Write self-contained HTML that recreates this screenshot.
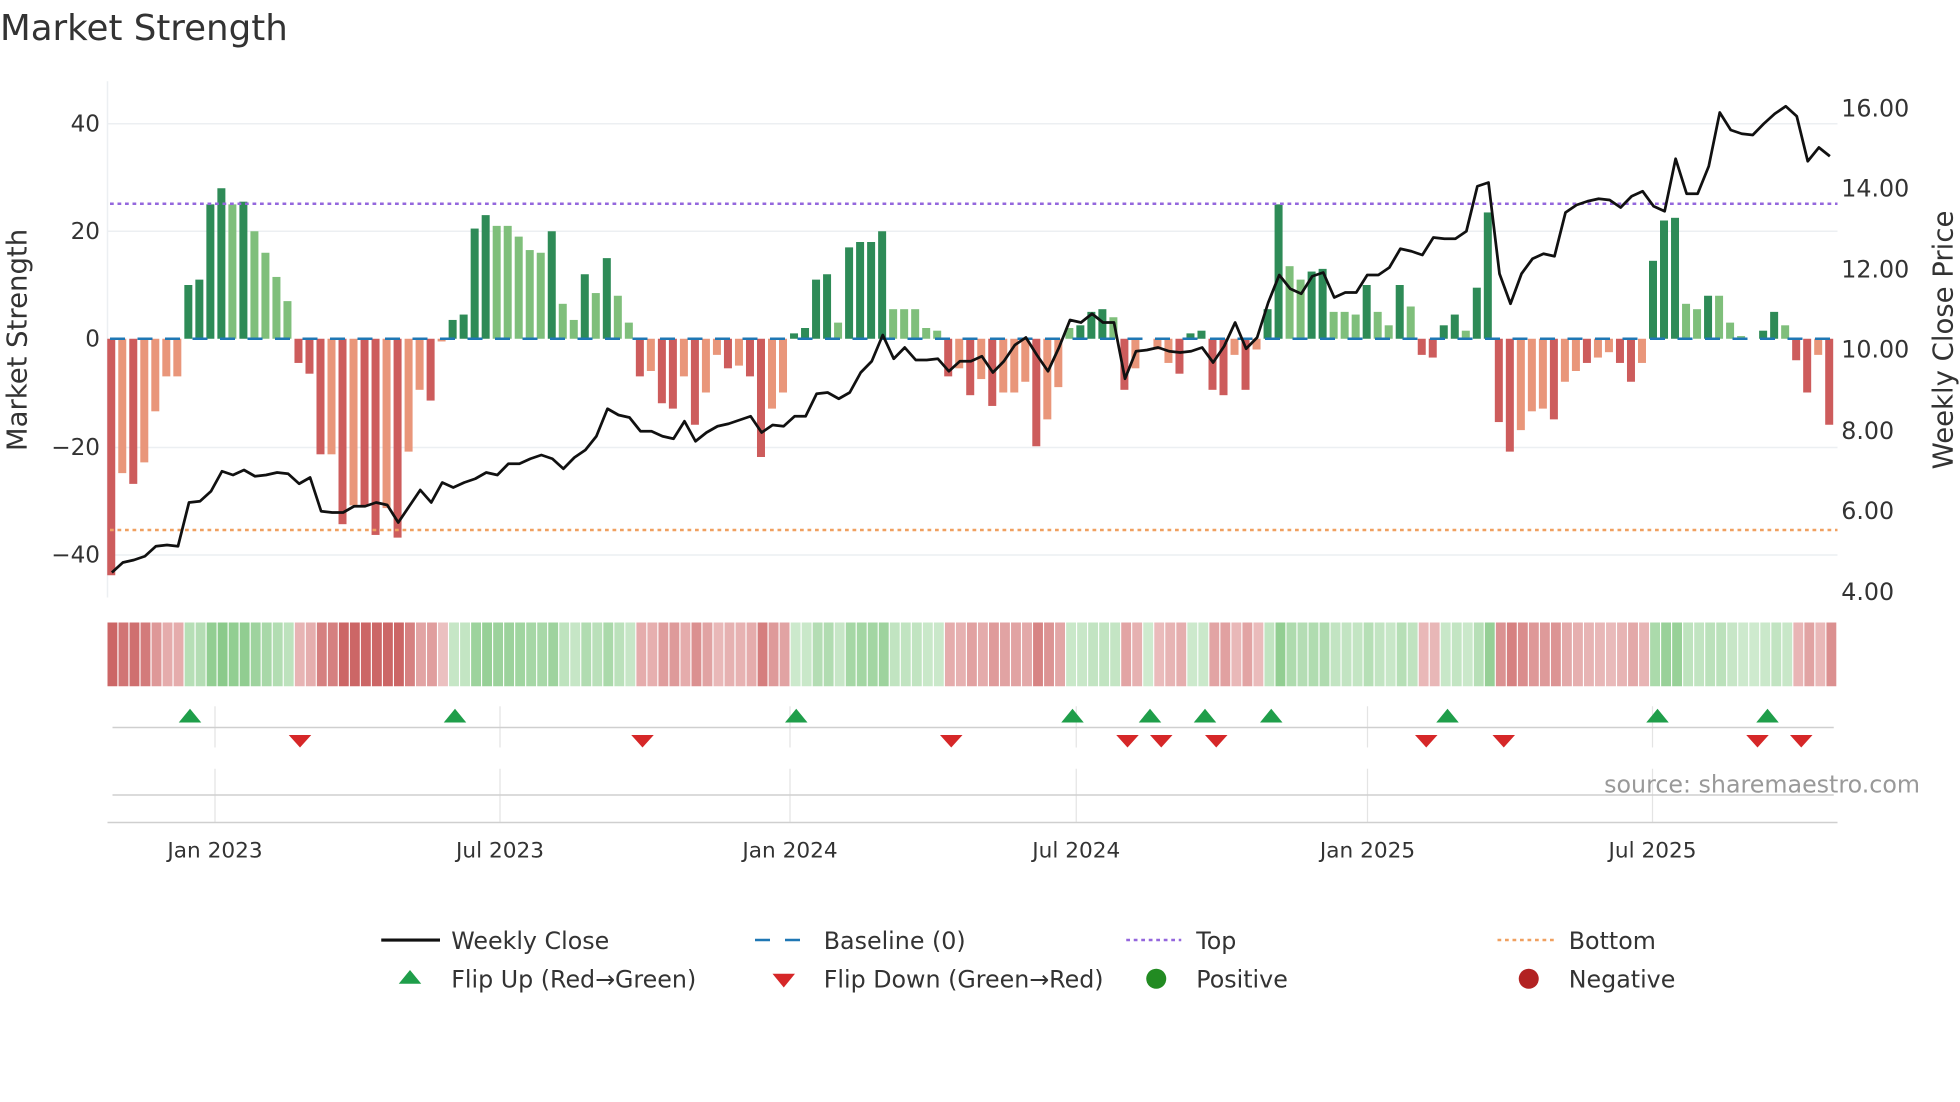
<!DOCTYPE html>
<html><head><meta charset="utf-8"><style>
html,body{margin:0;padding:0;background:#fff;}
svg{display:block;font-family:"DejaVu Sans","Liberation Sans",sans-serif;}
</style></head><body>
<svg id="s" width="1960" height="1102" viewBox="0 0 1568 881.6" xmlns="http://www.w3.org/2000/svg">
<text x="0" y="32" font-size="28.5" fill="#333">Market Strength</text>
<g stroke="#eceff2" stroke-width="1.2">
<line x1="86" y1="99" x2="1470" y2="99"/><line x1="86" y1="185" x2="1470" y2="185"/><line x1="86" y1="358" x2="1470" y2="358"/><line x1="86" y1="444" x2="1470" y2="444"/>
<line x1="86" y1="65" x2="86" y2="478"/>
</g>
<g font-size="18.5" fill="#333" text-anchor="end">
<text x="80" y="105">40</text><text x="80" y="277">0</text><text x="80" y="191">20</text><text x="80" y="364">−20</text><text x="80" y="450">−40</text>
</g>
<g font-size="19" fill="#333">
<text x="1473" y="93">16.00</text><text x="1473" y="157">14.00</text><text x="1473" y="222">12.00</text><text x="1473" y="286">10.00</text><text x="1473" y="351">8.00</text><text x="1473" y="415">6.00</text><text x="1473" y="480">4.00</text>
</g>
<text transform="translate(21,272) rotate(-90)" font-size="22" fill="#333" text-anchor="middle">Market Strength</text>
<text transform="translate(1562,272) rotate(-90)" font-size="22" fill="#333" text-anchor="middle">Weekly Close Price</text>
<g id="bars"></g>
<line x1="88" y1="271" x2="1470" y2="271" stroke="#1f77b4" stroke-width="2" stroke-dasharray="12,10"/>
<line x1="88" y1="163" x2="1470" y2="163" stroke="#9467dd" stroke-width="2" stroke-dasharray="3,3"/>
<line x1="88" y1="424" x2="1470" y2="424" stroke="#f0a060" stroke-width="2" stroke-dasharray="3,3"/>
<polyline id="pl" fill="none" stroke="#111" stroke-width="2.2" stroke-linejoin="round" points=""/>
<g id="strip"></g>
<g stroke="#e4e4e4" stroke-width="1">
<line x1="172" y1="565" x2="172" y2="598"/><line x1="400" y1="565" x2="400" y2="598"/><line x1="632" y1="565" x2="632" y2="598"/><line x1="861" y1="565" x2="861" y2="598"/><line x1="1094" y1="565" x2="1094" y2="598"/><line x1="1322" y1="565" x2="1322" y2="598"/>
<line x1="172" y1="615" x2="172" y2="658"/><line x1="400" y1="615" x2="400" y2="658"/><line x1="632" y1="615" x2="632" y2="658"/><line x1="861" y1="615" x2="861" y2="658"/><line x1="1094" y1="615" x2="1094" y2="658"/><line x1="1322" y1="615" x2="1322" y2="658"/>
</g>
<line x1="90" y1="582" x2="1467" y2="582" stroke="#cfcfcf" stroke-width="1.2"/>
<line x1="90" y1="636" x2="1467" y2="636" stroke="#cfcfcf" stroke-width="1.2"/>
<line x1="86" y1="658" x2="1470" y2="658" stroke="#cfcfcf" stroke-width="1.2"/>
<g id="mk"></g>
<text x="1536" y="634" font-size="19" fill="#999" text-anchor="end">source: sharemaestro.com</text>
<g font-size="17.3" fill="#333" text-anchor="middle">
<text x="172" y="686">Jan 2023</text><text x="400" y="686">Jul 2023</text><text x="632" y="686">Jan 2024</text><text x="861" y="686">Jul 2024</text><text x="1094" y="686">Jan 2025</text><text x="1322" y="686">Jul 2025</text>
</g>
<line x1="305" y1="752" x2="352" y2="752" stroke="#111" stroke-width="2.5"/>
<line x1="604" y1="752" x2="646" y2="752" stroke="#1f77b4" stroke-width="2" stroke-dasharray="12,12"/>
<line x1="901" y1="752" x2="945" y2="752" stroke="#9467dd" stroke-width="2" stroke-dasharray="3,3"/>
<line x1="1198" y1="752" x2="1245" y2="752" stroke="#f0a060" stroke-width="2" stroke-dasharray="3,3"/>
<polygon points="319,787 337,787 328,776" fill="#1f9e4a"/>
<polygon points="618,779 636,779 627,790" fill="#d62728"/>
<circle cx="925" cy="783" r="8" fill="#228b22"/>
<circle cx="1223" cy="783" r="8" fill="#b22222"/>
<g font-size="19" fill="#333">
<text x="361" y="759">Weekly Close</text><text x="659" y="759">Baseline (0)</text><text x="957" y="759">Top</text><text x="1255" y="759">Bottom</text>
<text x="361" y="790">Flip Up (Red→Green)</text><text x="659" y="790">Flip Down (Green→Red)</text><text x="957" y="790">Positive</text><text x="1255" y="790">Negative</text>
</g>
</svg>
<script>
var V=[[-44,1],[-25,0],[-27,1],[-23,0],[-13.5,0],[-7,0],[-7,0],[10,1],[11,1],[25,1],[28,1],[25,0],[25.5,1],[20,0],[16,0],[11.5,0],[7,0],[-4.5,1],[-6.5,1],[-21.5,1],[-21.5,0],[-34.5,1],[-31,0],[-31,1],[-36.5,1],[-31.5,0],[-37,1],[-21,0],[-9.5,0],[-11.5,1],[-0.5,0],[3.5,1],[4.5,1],[20.5,1],[23,1],[21,0],[21,0],[19,0],[16.5,0],[16,0],[20,1],[6.5,0],[3.5,0],[12,1],[8.5,0],[15,1],[8,0],[3,0],[-7,1],[-6,0],[-12,1],[-13,1],[-7,0],[-16,1],[-10,0],[-3,0],[-5.5,1],[-5,0],[-7,1],[-22,1],[-13,0],[-10,0],[1,1],[2,1],[11,1],[12,1],[3,0],[17,1],[18,1],[18,1],[20,1],[5.5,0],[5.5,0],[5.5,0],[2,0],[1.5,0],[-7,1],[-5.5,0],[-10.5,1],[-7.5,0],[-12.5,1],[-10,0],[-10,0],[-8,0],[-20,1],[-15,0],[-9,0],[2,0],[2.5,1],[5,1],[5.5,1],[4,0],[-9.5,1],[-5.5,0],[0,0],[-2,0],[-4.5,0],[-6.5,1],[1,1],[1.5,1],[-9.5,1],[-10.5,1],[-3,0],[-9.5,1],[-2,0],[5.5,1],[25,1],[13.5,0],[11,0],[12.5,1],[13,1],[5,0],[5,0],[4.5,0],[10,1],[5,0],[2.5,0],[10,1],[6,0],[-3,1],[-3.5,1],[2.5,1],[4.5,1],[1.5,0],[9.5,1],[23.5,1],[-15.5,1],[-21,1],[-17,0],[-13.5,0],[-13,0],[-15,1],[-8,0],[-6,0],[-4.5,1],[-3.5,0],[-2.5,0],[-4.5,1],[-8,1],[-4.5,0],[14.5,1],[22,1],[22.5,1],[6.5,0],[5.5,0],[8,1],[8,0],[3,0],[0.5,0],[0,0],[1.5,1],[5,1],[2.5,0],[-4,1],[-10,1],[-3,0],[-16,1]];
var P=[458,450,448,445,437,436,437,402,401,393,377,380,376,381,380,378,379,387,382,409,410,410,405,405,402,404,418,405,392,402,386,390,386,383,378,380,371,371,367,364,367,375,366,360,349,327,332,334,345,345,349,351,337,353,346,341,339,336,333,346,340,341,333,333,315,314,319,314,298,289,268,287,278,288,288,287,297,289,289,285,298,289,276,270,284,297,278,256,258,251,258,258,303,281,280,278,281,282,281,278,290,277,258,279,270,242,220,231,235,221,218,238,234,234,220,220,214,199,201,204,190,191,191,185,149,146,219,243,219,207,203,205,170,164,161,159,160,166,157,153,165,169,127,155,155,133,90,104,107,108,99,91,85,93,129,118,125];
var ns="http://www.w3.org/2000/svg",b=document.getElementById("bars"),st=document.getElementById("strip");
function r(g,x,y,w,h,c){var e=document.createElementNS(ns,"rect");e.setAttribute("x",x);e.setAttribute("y",y);e.setAttribute("width",w);e.setAttribute("height",h);e.setAttribute("fill",c);g.appendChild(e);}
function mix(a,c,t){var o=[];for(var k=0;k<3;k++)o.push(Math.round(a[k]+(c[k]-a[k])*t));return "rgb("+o.join(",")+")";}
var sx=8.81,x0=89,pts=[];
for(var i=0;i<V.length;i++){var v=V[i][0],d=V[i][1],cx=x0+i*sx;
 var col=v>=0?(d?"#2e8b57":"#7fbf7b"):(d?"#cd5c5c":"#e9967a");
 var y=271-v*4.3;
 if(Math.abs(v)>0.2) r(b,cx-3.2,Math.min(y,271),6.4,Math.abs(v*4.3),col);
 var t=Math.min(1,Math.abs(v)/30)*0.8+0.1;
 var sc=v>=0?mix([215,238,215],[125,196,125],t):mix([240,205,205],[200,90,90],t);
 r(st,86+i*8.815,498,7.9,51,sc);
 if(i<P.length)pts.push((cx+0.5).toFixed(1)+","+P[i]);}
document.getElementById("pl").setAttribute("points",pts.join(" "));
var mk=document.getElementById("mk"),s="";
[152,364,637,858,920,964,1017,1158,1326,1414].forEach(function(x){s+='<polygon points="'+(x-9)+',578 '+(x+9)+',578 '+x+',567" fill="#1f9e4a"/>';});
[240,514,761,902,929,973,1141,1203,1406,1441].forEach(function(x){s+='<polygon points="'+(x-9)+',588 '+(x+9)+',588 '+x+',598" fill="#d62728"/>';});
mk.innerHTML=s;
</script>
</body></html>
